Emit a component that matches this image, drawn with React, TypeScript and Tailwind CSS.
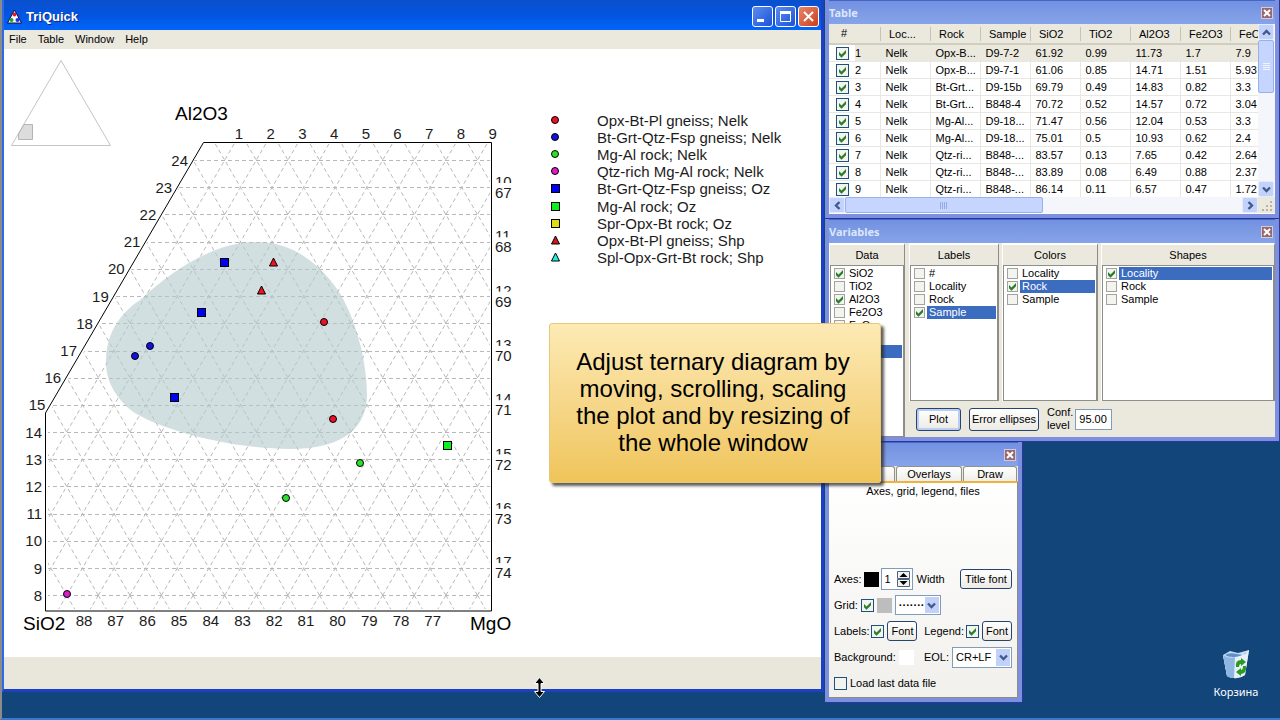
import type { ReactNode } from 'react';
import clsx from 'clsx';

const headers = ['Loc...', 'Rock', 'Sample', 'SiO2', 'TiO2', 'Al2O3', 'Fe2O3', 'FeO'];

const rows = [
  ['Nelk', 'Opx-B...', 'D9-7-2', '61.92', '0.99', '11.73', '1.7', '7.9'],
  ['Nelk', 'Opx-B...', 'D9-7-1', '61.06', '0.85', '14.71', '1.51', '5.93'],
  ['Nelk', 'Bt-Grt...', 'D9-15b', '69.79', '0.49', '14.83', '0.82', '3.3'],
  ['Nelk', 'Bt-Grt...', 'B848-4', '70.72', '0.52', '14.57', '0.72', '3.04'],
  ['Nelk', 'Mg-Al...', 'D9-18...', '71.47', '0.56', '12.04', '0.53', '3.3'],
  ['Nelk', 'Mg-Al...', 'D9-18...', '75.01', '0.5', '10.93', '0.62', '2.4'],
  ['Nelk', 'Qtz-ri...', 'B848-...', '83.57', '0.13', '7.65', '0.42', '2.64'],
  ['Nelk', 'Qtz-ri...', 'B848-...', '83.89', '0.08', '6.49', '0.88', '2.37'],
  ['Nelk', 'Qtz-ri...', 'B848-...', '86.14', '0.11', '6.57', '0.47', '1.72'],
];

type Kind = 'circle' | 'square' | 'triangle';
type Mark = { kind: Kind; color: string; x: number; y: number };

const legend: { kind: Kind; color: string; text: string }[] = [
  { kind: 'circle', color: '#e8112a', text: 'Opx-Bt-Pl gneiss; Nelk' },
  { kind: 'circle', color: '#1212e0', text: 'Bt-Grt-Qtz-Fsp gneiss; Nelk' },
  { kind: 'circle', color: '#2ce02c', text: 'Mg-Al rock; Nelk' },
  { kind: 'circle', color: '#d81fc8', text: 'Qtz-rich Mg-Al rock; Nelk' },
  { kind: 'square', color: '#0000f5', text: 'Bt-Grt-Qtz-Fsp gneiss; Oz' },
  { kind: 'square', color: '#0cf01c', text: 'Mg-Al rock; Oz' },
  { kind: 'square', color: '#e0dc14', text: 'Spr-Opx-Bt rock; Oz' },
  { kind: 'triangle', color: '#d0141c', text: 'Opx-Bt-Pl gneiss; Shp' },
  { kind: 'triangle', color: '#20f0dc', text: 'Spl-Opx-Grt-Bt rock; Shp' },
];

const points: Mark[] = [
  { kind: 'square', color: '#0000f5', x: 224, y: 262 },
  { kind: 'square', color: '#0000f5', x: 201, y: 312 },
  { kind: 'square', color: '#0000f5', x: 174, y: 397 },
  { kind: 'triangle', color: '#f01420', x: 273, y: 262 },
  { kind: 'triangle', color: '#f01420', x: 261, y: 290 },
  { kind: 'circle', color: '#1212e0', x: 150, y: 346 },
  { kind: 'circle', color: '#1212e0', x: 135, y: 356 },
  { kind: 'circle', color: '#e8112a', x: 324, y: 322 },
  { kind: 'circle', color: '#e8112a', x: 333, y: 419 },
  { kind: 'circle', color: '#2ce02c', x: 360, y: 463 },
  { kind: 'circle', color: '#2ce02c', x: 286, y: 498 },
  { kind: 'square', color: '#0cf01c', x: 447, y: 445 },
  { kind: 'circle', color: '#d81fc8', x: 67, y: 594 },
];

function Marker({ kind, color, x, y }: Mark) {
  if (kind === 'circle') return <circle cx={x} cy={y} r="3.5" fill={color} stroke="#000" />;
  if (kind === 'square') return <rect x={x - 3.5} y={y - 3.5} width="8" height="8" fill={color} stroke="#000" />;
  return <path d={`M${x + 0.5} ${y - 4}l4 8h-8z`} fill={color} stroke="#000" />;
}

const rowY = (n: number) => 595.3 - (n - 8) * 27.2;

function TernaryPlot() {
  const levels = Array.from({ length: 17 }, (_, i) => i + 8);
  const diagonals = Array.from({ length: 32 }, (_, i) => 66.7 + (i - 9) * 31.6);

  return (
    <svg
      viewBox="4 49 817 608"
      className="block h-full w-full fill-[#1c1c1c] font-['Liberation_Sans',Arial,sans-serif] text-[15px]"
      role="img"
      aria-label="Ternary diagram"
    >
      <defs>
        <clipPath id="frame">
          <path d="M204 144H490V609H48V414z" />
        </clipPath>
      </defs>

      {/* overview of the whole triangle */}
      <path d="M61 60.500L11.500 145.500H110.500z" fill="none" stroke="#c4c4c4" />
      <path d="M24 124.500H32.500V139.500H18.500V134z" fill="#dcdcdc" stroke="#b4b4b4" />

      <g clipPath="url(#frame)" stroke="#b8b8b8" strokeDasharray="4 3" fill="none">
        {levels.map((n) => (
          <path key={n} d={`M46 ${Math.round(rowY(n)) + 0.5}H491`} />
        ))}
        {diagonals.map((x) => (
          <g key={x}>
            <path d={`M${x} 595.3L${x + 264.5} 140`} />
            <path d={`M${x} 595.3L${x - 264.5} 140`} />
            <path d={`M${x} 595.3l9.300 16M${x} 595.3l-9.300 16`} />
          </g>
        ))}
      </g>
      <path
        d="M257 242C300 242 327 273 341 295C358 325 367 365 367 395C367 425 347 449 290 449C230 449 150 428 127 407C112 392 106 378 106 362C106 335 118 315 140 300C175 268 215 242 257 242z"
        fill="#b4cacb"
        fillOpacity="0.6"
      />
      <path d="M203.500 142.500H491.500V611H45.500V413z" fill="none" stroke="#000" />

      {points.map((p) => (
        <Marker key={`${p.x}-${p.y}`} {...p} />
      ))}

      {levels.map((n) => (
        <text key={n} x={n > 14 ? 188 - (24 - n) * 15.85 : 42} y={rowY(n) + 5.5} textAnchor="end">
          {n}
        </text>
      ))}
      {[1, 2, 3, 4, 5, 6, 7, 8, 9].map((n) => (
        <text key={n} x={239 + (n - 1) * 31.7} y="139" textAnchor="middle">
          {n}
        </text>
      ))}
      {Array.from({ length: 12 }, (_, i) => (
        <text key={i} x={84 + i * 31.7} y="626" textAnchor="middle">
          {88 - i}
        </text>
      ))}
      {/* the MgO labels are half hidden by the SiO2 ones */}
      {Array.from({ length: 8 }, (_, i) => (
        <g key={i}>
          <text x="495" y={187 + i * 54.3}>
            {10 + i}
          </text>
          <rect x="494" y={183 + i * 54.3} width="20" height="14" fill="#fff" />
          <text x="495" y={198 + i * 54.3}>
            {67 + i}
          </text>
        </g>
      ))}

      <g className="fill-black text-[19px]">
        <text x="175" y="120">Al2O3</text>
        <text x="23" y="630">SiO2</text>
        <text x="470" y="630">MgO</text>
      </g>

      {legend.map((item, i) => (
        <g key={item.text}>
          <Marker kind={item.kind} color={item.color} x={555} y={120 + Math.round(i * 17.1)} />
          <text x="597" y={126 + Math.round(i * 17.1)}>
            {item.text}
          </text>
        </g>
      ))}
    </svg>
  );
}

function Tick({ label, checked, size = 'md' }: { label?: string; checked?: boolean; size?: 'sm' | 'md' }) {
  return (
    <span className="inline-grid shrink-0 place-items-center">
      <input
        type="checkbox"
        aria-label={label}
        defaultChecked={checked}
        className={clsx(
          'peer col-start-1 row-start-1 appearance-none border bg-[#f3f3ef]',
          size === 'sm' ? 'size-[11px] border-[#a3a39b]' : 'size-[13px] border-[#1c5180]'
        )}
      />
      <svg viewBox="0 0 9 9" className="pointer-events-none invisible col-start-1 row-start-1 size-[9px] peer-checked:visible">
        <path d="M1 3L3.500 5.500L8 1V4.200L3.500 8.700L1 6.200z" fill="#2a7d2a" />
      </svg>
    </span>
  );
}

function Chevron({ className }: { className?: string }) {
  return (
    <svg viewBox="0 0 9 9" className={clsx('size-[9px]', className)}>
      <path d="M1 2.500L4.500 6L8 2.500" fill="none" stroke="#42598c" strokeWidth="2.400" />
    </svg>
  );
}

const scrollButton = 'grid size-4 shrink-0 place-items-center rounded-[2px] border border-[#e4ebff] bg-[#c3d2fb]';

function ToolWindow({ title, className, children }: { title: string; className: string; children: ReactNode }) {
  return (
    <section
      className={clsx(
        'absolute flex flex-col border-x-4 border-b-4 border-[#7c90df] bg-[#ebe8de] shadow-[1px_1px_0_#26389c]',
        className
      )}
    >
      <header className="flex h-6 shrink-0 items-center justify-between border-t border-[#4a64c4] bg-linear-to-b from-[#7191e2] via-[#7d9ae4] to-[#86a4ea] pr-[2px]">
        <h2 className="font-['Noto_Sans',sans-serif] text-[11px] font-bold text-[#dbe6fd]">{title}</h2>
        <button
          type="button"
          aria-label={`Close ${title}`}
          className="grid size-3 place-items-center border border-[#d5c9dc] bg-[#98686f]"
        >
          <svg viewBox="0 0 8 8" className="size-2">
            <path d="M1 1l6 6M7 1l-6 6" stroke="#fff" strokeWidth="2" />
          </svg>
        </button>
      </header>
      {children}
    </section>
  );
}

function DataTable() {
  return (
    <div className="flex min-h-0 flex-1 flex-col bg-[#fbfbfb] pb-px">
      <div className="flex min-h-0 flex-1">
        <div className="min-w-0 flex-1 overflow-hidden bg-white">
          <table className="w-[451px] table-fixed border-collapse">
            <thead>
              <tr className="h-5 border-b-2 border-[#d2cebf] bg-[#ebe8de]">
                <th className="w-[51px] pl-3 text-left font-normal">#</th>
                {headers.map((h) => (
                  <th key={h} className="w-[50px] p-0 text-left font-normal">
                    <span className="block h-[14px] border-l border-[#c7c3b2] pl-2 leading-[14px]">{h}</span>
                  </th>
                ))}
              </tr>
            </thead>
            <tbody>
              {rows.map((row, i) => (
                <tr key={i} className={clsx('h-[17px] border-b border-[#e7e7e3]', i === 0 && 'bg-[#ebe8de]')}>
                  <td className="p-0">
                    <label className="flex h-4 items-center">
                      <span className="flex h-4 w-[26px] items-center bg-white pl-[7px]">
                        <Tick checked />
                      </span>
                      {i + 1}
                    </label>
                  </td>
                  {row.map((cell, j) => (
                    <td key={j} className="overflow-hidden border-l border-[#e7e7e3] p-0 pl-[5px]">
                      {cell}
                    </td>
                  ))}
                </tr>
              ))}
            </tbody>
          </table>
        </div>
        <div className="flex w-[17px] shrink-0 flex-col bg-[#f5f6fb]">
          <button type="button" aria-label="Scroll up" className={scrollButton}>
            <Chevron className="rotate-180" />
          </button>
          <div className="grid h-[53px] w-4 place-items-center rounded-[2px] border border-[#98b0ee] bg-[#c6d5fd]">
            <svg viewBox="0 0 7 8" className="h-2 w-[7px]">
              <path d="M0 .5h7M0 2.500h7M0 4.500h7M0 6.500h7" stroke="#f0f4ff" />
            </svg>
          </div>
          <button type="button" aria-label="Scroll down" className={clsx(scrollButton, 'mt-auto')}>
            <Chevron />
          </button>
        </div>
      </div>
      <div className="flex h-4 shrink-0 bg-[#f5f6fb]">
        <button type="button" aria-label="Scroll left" className={scrollButton}>
          <Chevron className="rotate-90" />
        </button>
        <div className="grid w-[198px] place-items-center rounded-[2px] border border-[#98b0ee] bg-[#c6d5fd]">
          <svg viewBox="0 0 8 7" className="h-[7px] w-2">
            <path d="M.5 0v7M2.500 0v7M4.500 0v7M6.500 0v7" stroke="#93aae6" />
          </svg>
        </div>
        <button type="button" aria-label="Scroll right" className={clsx(scrollButton, 'ml-auto')}>
          <Chevron className="-rotate-90" />
        </button>
        <svg viewBox="0 0 17 16" className="h-4 w-[17px] bg-[#ebe8de]">
          <path d="M12 4h2v2h-2zM8 8h2v2h-2zM12 8h2v2h-2zM4 12h2v2h-2zM8 12h2v2h-2zM12 12h2v2h-2z" fill="#b9b4a3" />
        </svg>
      </div>
    </div>
  );
}

type Item = { name: string; checked?: boolean; selected?: boolean };

function CheckList({ title, items, className }: { title: string; items: Item[]; className: string }) {
  return (
    <fieldset
      className={clsx('flex min-w-0 flex-col border-t-2 border-r border-l border-t-white border-r-[#8f8d83] border-l-white', className)}
    >
      <div className="grid h-5 shrink-0 place-items-center">{title}</div>
      <div className="flex-1 overflow-hidden border border-[#8d8f8c] bg-white py-px pr-px pl-[3px]">
        {items.map((item) => (
          <label key={item.name} className="flex h-[13px] items-center gap-[2px]">
            <Tick size="sm" checked={item.checked} />
            <span className={clsx('h-[13px] flex-1 pl-[2px] leading-[13px]', item.selected && 'bg-[#3b6cc0] text-white')}>
              {item.name}
            </span>
          </label>
        ))}
      </div>
    </fieldset>
  );
}

const xpButton = 'rounded-[3px] border border-[#27446f] bg-linear-to-b from-white to-[#ecebe5]';

function Variables() {
  return (
    <div className="flex min-h-0 flex-1 gap-1">
      <CheckList
        title="Data"
        className="w-[76px]"
        items={[
          { name: 'SiO2', checked: true },
          { name: 'TiO2' },
          { name: 'Al2O3', checked: true },
          { name: 'Fe2O3' },
          { name: 'FeO' },
          { name: 'MnO' },
          { name: 'MgO', checked: true, selected: true },
        ]}
      />
      <div className="flex min-w-0 flex-1 flex-col">
        <div className="flex h-[158px] gap-[3px]">
          <CheckList
            title="Labels"
            className="w-[90px]"
            items={[{ name: '#' }, { name: 'Locality' }, { name: 'Rock' }, { name: 'Sample', checked: true, selected: true }]}
          />
          <CheckList
            title="Colors"
            className="w-[96px]"
            items={[{ name: 'Locality' }, { name: 'Rock', checked: true, selected: true }, { name: 'Sample' }]}
          />
          <CheckList
            title="Shapes"
            className="flex-1"
            items={[{ name: 'Locality', checked: true, selected: true }, { name: 'Rock' }, { name: 'Sample' }]}
          />
        </div>
        <div className="flex flex-1 items-center gap-2 pl-[7px]">
          <button type="button" className={clsx(xpButton, 'h-[23px] w-[45px] shadow-[inset_0_0_0_2px_#b9cdf5]')}>
            Plot
          </button>
          <button type="button" className={clsx(xpButton, 'h-[23px] w-[70px]')}>
            Error ellipses
          </button>
          <label className="flex items-center gap-[2px]">
            <span className="leading-[13px]">
              Conf.
              <br />
              level
            </span>
            <input defaultValue="95.00" className="h-[21px] w-[37px] border border-[#7f9db9] bg-white pl-[3px]" />
          </label>
        </div>
      </div>
    </div>
  );
}

function Combo({ label, options, className }: { label: string; options: string[]; className: string }) {
  return (
    <span className={clsx('relative flex', className)}>
      <select aria-label={label} className="w-full appearance-none border border-[#7f9db9] bg-white pl-[3px] outline-none">
        {options.map((o) => (
          <option key={o}>{o}</option>
        ))}
      </select>
      <span className="pointer-events-none absolute inset-y-[2px] right-[2px] grid w-[14px] place-items-center bg-[#c1d1fa]">
        <Chevron />
      </span>
    </span>
  );
}

function PlotOptions() {
  return (
    <div className="flex min-h-0 flex-1 flex-col">
      <div role="tablist" className="flex h-[15px] shrink-0 gap-px">
        {['Axes', 'Overlays', 'Draw'].map((t) => (
          <button
            key={t}
            type="button"
            role="tab"
            className={clsx(
              'rounded-t-[3px] border border-b-0 border-[#91918b] bg-linear-to-b from-white to-[#efeee8]',
              t === 'Draw' ? 'w-[54px]' : 'w-[66px]'
            )}
          >
            {t}
          </button>
        ))}
      </div>
      <div className="flex flex-1 flex-col border-t-2 border-r border-b border-t-[#f0b23c] border-r-[#8f8d83] border-b-[#8f8d83] bg-linear-to-b from-white to-[#f1f0ec]">
        <h3 className="text-center leading-4">Axes, grid, legend, files</h3>
        <div className="mt-auto flex flex-col gap-1 pr-[5px] pb-[3px] pl-[5px]">
          <div className="flex h-[22px] items-center gap-[2px]">
            Axes:
            <button type="button" aria-label="Axes color" className="size-[15px] bg-black" />
            <label className="flex items-center gap-1">
              <span className="flex h-[22px] w-8 items-center justify-between border border-[#7f9db9] bg-white pr-[2px] pl-[3px]">
                <input defaultValue="1" className="w-2 bg-transparent" />
                <svg viewBox="0 0 13 16" className="h-4 w-[13px]">
                  <path d="M.5 .5h12v7h-12zM.5 8.500h12v7h-12z" fill="#f2f2ee" stroke="#4d6185" />
                  <path d="M6.500 2l4 4h-8zM6.500 14l4-4h-8z" fill="#000" />
                </svg>
              </span>
              Width
            </label>
            <button type="button" className={clsx(xpButton, 'ml-auto h-5 w-[52px]')}>
              Title font
            </button>
          </div>
          <div className="flex h-[22px] items-center gap-[3px]">
            <label className="flex items-center gap-[3px]">
              Grid:
              <Tick checked />
            </label>
            <button type="button" aria-label="Grid color" className="size-[15px] bg-[#bdbdbd]" />
            <Combo label="Grid line style" options={['·······']} className="h-5 w-[46px] font-bold" />
          </div>
          <div className="flex h-[22px] items-center gap-[3px]">
            <label className="flex items-center gap-[2px]">
              Labels:
              <Tick checked />
            </label>
            <button type="button" className={clsx(xpButton, 'h-5 w-[30px]')}>
              Font
            </button>
            <label className="ml-auto flex items-center gap-[2px]">
              Legend:
              <Tick checked />
            </label>
            <button type="button" className={clsx(xpButton, 'h-5 w-[30px]')}>
              Font
            </button>
          </div>
          <div className="flex h-[22px] items-center gap-[3px]">
            Background:
            <button type="button" aria-label="Background color" className="size-[15px] bg-white" />
            <span className="ml-auto">EOL:</span>
            <Combo label="EOL" options={['CR+LF', 'LF', 'CR']} className="h-[21px] w-[60px]" />
          </div>
          <label className="flex h-[22px] items-center gap-[3px]">
            <Tick />
            Load last data file
          </label>
        </div>
      </div>
    </div>
  );
}

const captionButton = 'grid size-[21px] place-items-center rounded-[3px] border border-white';

function MainWindow() {
  return (
    <main className="absolute top-0 left-[2px] flex h-[692px] w-[822px] flex-col border-r-[3px] border-b-[3px] border-l-2 border-[#1c3fc4] border-l-[#2f6be0] bg-white">
      <header className="flex h-[30px] shrink-0 items-center bg-linear-to-b from-[#0a50cc] via-[#0454e0] to-[#0066fa] pt-[3px] pr-[2px] pl-[3px]">
        <svg viewBox="0 0 15 14" className="size-[15px]">
          <path d="M7.500 .5L14.500 13.500H.5z" fill="#fff" stroke="#101040" />
          <circle cx="7.500" cy="5" r="2" fill="#e02020" />
          <circle cx="4.500" cy="10.500" r="2" fill="#20a030" />
          <circle cx="10.500" cy="10.500" r="2" fill="#2030e0" />
        </svg>
        <h1 className="flex-1 pl-1 text-[13px] font-bold text-white [text-shadow:1px_1px_0_#0a2a8a]">TriQuick</h1>
        <div className="flex gap-[2px]">
          <button type="button" aria-label="Minimize" className={clsx(captionButton, 'bg-linear-to-br from-[#5c8cf0] to-[#1c50d8]')}>
            <svg viewBox="0 0 15 15" className="size-[15px]">
              <path d="M2 10h7v3H2z" fill="#fff" />
            </svg>
          </button>
          <button type="button" aria-label="Maximize" className={clsx(captionButton, 'bg-linear-to-br from-[#5c8cf0] to-[#1c50d8]')}>
            <svg viewBox="0 0 15 15" className="size-[15px]">
              <path d="M2.500 3.500h10v9h-10z" fill="none" stroke="#fff" />
              <path d="M2 2h11v3H2z" fill="#fff" />
            </svg>
          </button>
          <button type="button" aria-label="Close" className={clsx(captionButton, 'bg-linear-to-br from-[#e88468] to-[#cc3c18]')}>
            <svg viewBox="0 0 15 15" className="size-[15px]">
              <path d="M3 3l9 9M12 3l-9 9" stroke="#fff" strokeWidth="2" />
            </svg>
          </button>
        </div>
      </header>
      <nav className="flex h-[19px] shrink-0 items-center gap-[11px] bg-[#ebe8de] pl-[5px]">
        {['File', 'Table', 'Window', 'Help'].map((m) => (
          <button key={m} type="button">
            {m}
          </button>
        ))}
      </nav>
      <div className="min-h-0 flex-1">
        <TernaryPlot />
      </div>
      <footer className="h-8 shrink-0 bg-[#e9e6db]" />
    </main>
  );
}

export default function App() {
  return (
    <div className="relative h-screen min-h-[720px] w-full overflow-hidden border-b-2 border-l-2 border-b-[#3b78cf] border-l-[#8b8b8b] bg-[#12457a] font-['Liberation_Sans',Arial,sans-serif] text-[11px] leading-[13px] whitespace-nowrap text-black">
      <div className="absolute inset-y-0 -left-[2px] w-full">
        <MainWindow />
        <ToolWindow title="Table" className="top-0 left-[825px] h-[218px] w-[454px]">
          <DataTable />
        </ToolWindow>
        <ToolWindow title="Variables" className="top-[219px] left-[825px] h-[222px] w-[454px]">
          <Variables />
        </ToolWindow>
        <ToolWindow title="Plot" className="top-[442px] left-[825px] h-[260px] w-[197px]">
          <PlotOptions />
        </ToolWindow>

        <a href="#bin" className="absolute top-[648px] left-[1206px] flex w-[60px] flex-col items-center gap-[5px] text-white">
          <svg viewBox="0 0 30 32" className="h-8 w-[30px]">
            <path d="M2 7L9 3L17 5L28 2L24 27Q16 33 6 28z" fill="#c3dcf3" />
            <path d="M2 7Q8 11 14 9Q22 7 28 2L24 27Q16 33 6 28z" fill="#e6f1fb" />
            <path d="M2 7Q8 11 14 9L13 30Q8 30 6 28z" fill="#8fb6e2" />
            <path d="M4 7Q8 4 16 6T26 4Q20 9 12 9Q7 9 4 7z" fill="#5f8fc8" />
            <path d="M15 19Q14 12 20 12L20 10L25 14L20 18L20 16Q18 16 18 19zM25 18Q26 25 20 26L20 28L15 24L20 20L20 22Q22 22 22 18z" fill="#2c9a20" />
          </svg>
          <span className="font-['Noto_Sans',sans-serif] text-[11px]">Корзина</span>
        </a>

        <aside className="absolute top-[323px] left-[549px] grid h-[160px] w-[332px] place-items-center rounded-[3px] border border-[#e6c878] bg-linear-to-b from-[#fdeab4] to-[#efc459] pr-1 pb-[2px] text-center text-[24px] leading-[27px] shadow-[3px_3px_3px_rgba(40,40,40,0.75)]">
          <p>
            Adjust ternary diagram by
            <br />
            moving, scrolling, scaling
            <br />
            the plot and by resizing of
            <br />
            the whole window
          </p>
        </aside>

        <svg viewBox="0 0 11 21" className="absolute top-[677px] left-[534px] h-[21px] w-[11px]">
          <path d="M5.500 .5L10.500 6.500H7V14.500H10.500L5.500 20.500L.5 14.500H4V6.500H.5z" fill="#000" stroke="#fff" />
        </svg>
      </div>
    </div>
  );
}
